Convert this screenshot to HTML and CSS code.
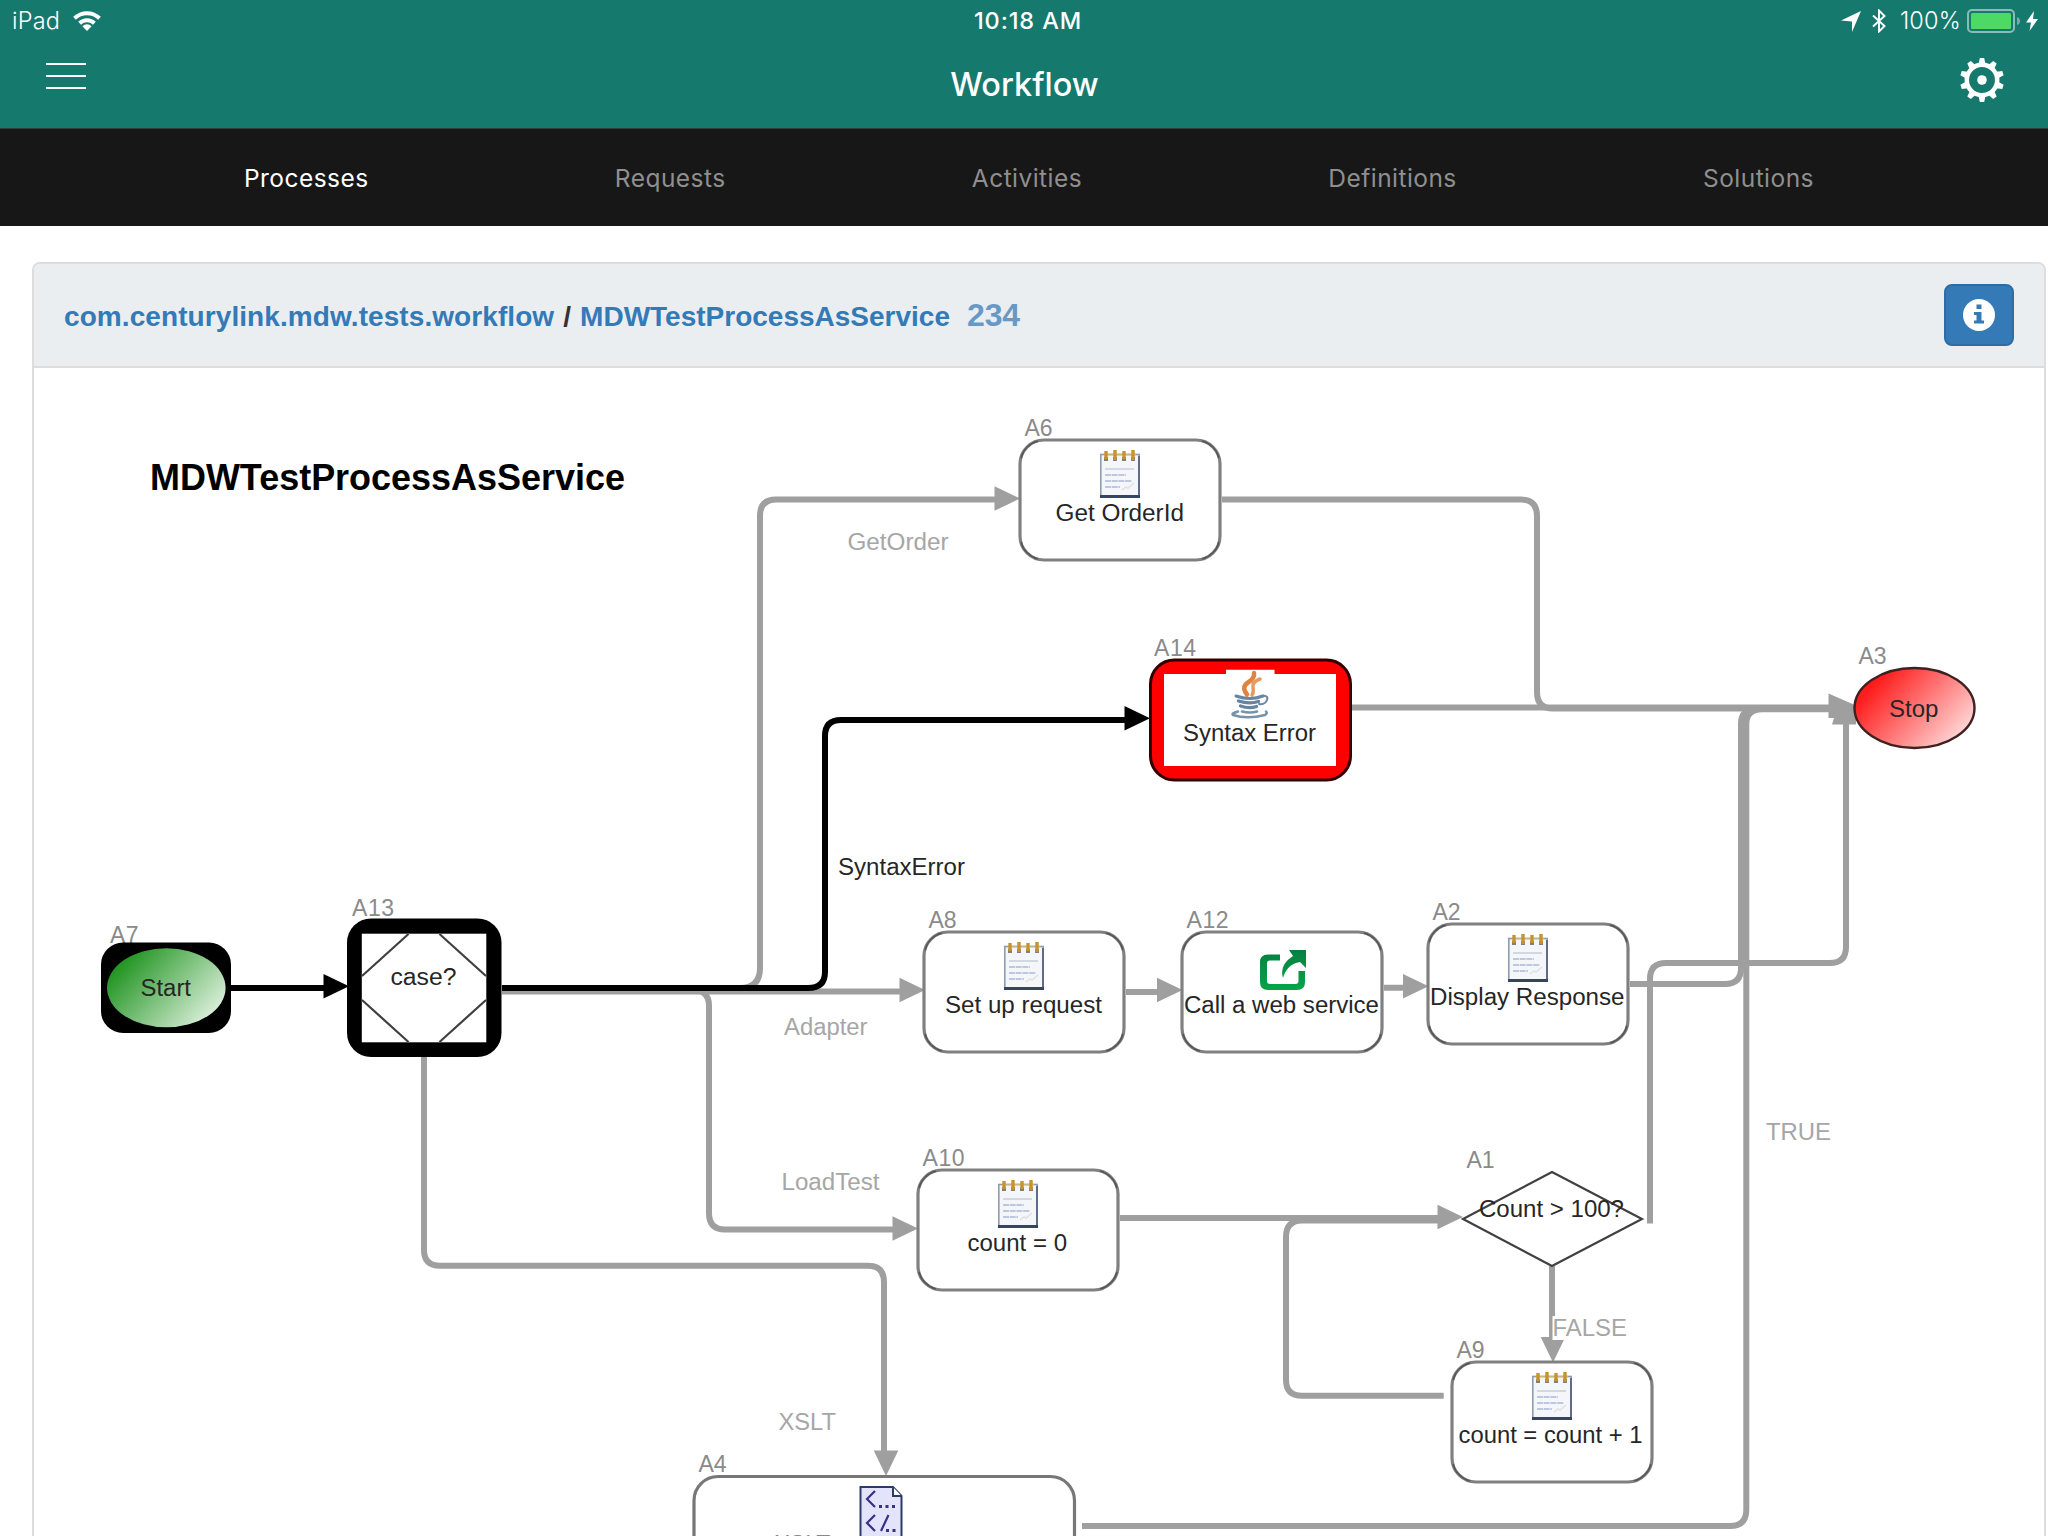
FILE: index.html
```html
<!DOCTYPE html>
<html lang="en">
<head>
<meta charset="utf-8">
<title>Workflow</title>
<link rel="stylesheet" href="styles.css">
</head>
<body>
<header class="app-header">
  <div class="status-bar">
    <div class="status-left">
      <span class="device">iPad</span>
      <svg class="wifi" width="28" height="20" viewBox="0 0 28 20"><g fill="none" stroke="#fff" stroke-width="4"><path d="M1.500 7.200a18 18 0 0 1 25 0"/><path d="M6.600 12.200a10.600 10.600 0 0 1 14.800 0"/></g><path d="M14 20l-4.600-4.800a6.600 6.600 0 0 1 9.200 0z" fill="#fff"/></svg>
    </div>
    <span class="clock">10:18 AM</span>
    <div class="status-right">
      <svg class="locate" width="20" height="21" viewBox="0 0 20 21"><path d="M20 0L11 21V10.500L0 9.500z" fill="#fff"/></svg>
      <svg class="bluetooth" width="16" height="24" viewBox="0 0 16 24"><path d="M2 6.500l11.500 10.500L8 22.500V1.500L13.500 7 2 17.500" fill="none" stroke="#fff" stroke-width="1.900"/></svg>
      <span class="percent">100%</span>
      <svg class="battery" width="54" height="24" viewBox="0 0 54 24"><rect x="1" y="1" width="46" height="22" rx="4" fill="none" stroke="#8abcb6" stroke-width="2"/><rect x="4" y="4" width="40" height="16" rx="1.500" fill="#4cd964"/><path d="M50 8q3 1 3 4t-3 4z" fill="#73afa8"/></svg>
      <svg class="bolt" width="12" height="20" viewBox="0 0 12 20"><path d="M8 0L0 11.500H5L3.500 20 12 8H7z" fill="#fff"/></svg>
    </div>
  </div>
  <div class="title-bar">
    <div class="menu"><i></i><i></i><i></i></div>
    <h1>Workflow</h1>
    <svg class="gear" width="44" height="44" viewBox="-22 -22 44 44">
      <defs><path id="tooth" d="M-3.400-16L-2.200-22H2.200L3.400-16z"/></defs>
      <g fill="#fff"><circle r="15.200" fill="none" stroke="#fff" stroke-width="4.500"/><circle r="4.800"/>
      <use href="#tooth"/><use href="#tooth" transform="rotate(36)"/><use href="#tooth" transform="rotate(72)"/><use href="#tooth" transform="rotate(108)"/><use href="#tooth" transform="rotate(144)"/><use href="#tooth" transform="rotate(180)"/><use href="#tooth" transform="rotate(216)"/><use href="#tooth" transform="rotate(252)"/><use href="#tooth" transform="rotate(288)"/><use href="#tooth" transform="rotate(324)"/></g>
    </svg>
  </div>
</header>
<nav class="tabs">
  <a class="active">Processes</a><a>Requests</a><a>Activities</a><a>Definitions</a><a>Solutions</a>
</nav>
<main class="panel">
  <div class="panel-heading">
    <div class="crumbs"><a class="pkg">com.centurylink.mdw.tests.workflow</a><span class="slash">/</span><a class="proc">MDWTestProcessAsService</a><a class="instance">234</a></div>
    <button class="info"><svg width="32" height="32" viewBox="0 0 32 32"><circle cx="16" cy="16" r="16" fill="#fff"/><path d="M13.500 5.500h5v4.500h-5zM11 13h7.500v8.500H21V24.500H11V21.500h2.500V16H11z" fill="#337ab7"/></svg></button>
  </div>
  <svg class="diagram" width="2010" height="1168" viewBox="34 368 2010 1168">
    <defs>
      <linearGradient id="green" x1="0" y1="0.200" x2="1" y2="0.800"><stop offset="0.050" stop-color="#1c921c"/><stop offset="1" stop-color="#e6f4e6"/></linearGradient>
      <linearGradient id="red" x1="0" y1="0.200" x2="1" y2="0.800"><stop offset="0.120" stop-color="#ff1c1c"/><stop offset="1" stop-color="#ffe4e4"/></linearGradient>
      <linearGradient id="leaf" x1="0" y1="0" x2="0" y2="1"><stop offset="0" stop-color="#087f42"/><stop offset="1" stop-color="#05a549"/></linearGradient>
      <g id="box">
        <rect width="200" height="120" rx="24" fill="#fff" stroke="#808080" stroke-width="3.200"/>
        <path class="corners" d="M1 18A24 24 0 0 1 18 1M182 1A24 24 0 0 1 199 18M199 102A24 24 0 0 1 182 119M18 119A24 24 0 0 1 1 102"/>
      </g>
      <g id="pad">
        <rect x="0.800" y="4.500" width="38.400" height="42" fill="#f4f6fa" stroke="#8d9bb0" stroke-width="1.600"/>
        <path d="M39 6V47" stroke="#5d6c88" stroke-width="2"/><path d="M0 46.500H40" stroke="#36445f" stroke-width="3"/>
        <path d="M4 4.500H36" stroke="#c9b48c" stroke-width="1.500"/>
        <path d="M6 7v4M15 7v4M24 7v4M33 7v4" stroke="#7e7f86" stroke-width="4"/>
        <path d="M6 1v8M15 0v10M24 1v8M33 0v10" stroke="#c8932f" stroke-width="3.400"/>
        <path d="M5 19H34" stroke="#c9d1dd" stroke-width="1.600"/>
        <path d="M5 25H26M5 31H32M5 37H20" stroke="#bcc7e0" stroke-width="2.200" stroke-dasharray="6 0.700"/>
        <path d="M22 40l4-3 2 1 6-5" stroke="#dfe2de" stroke-width="1.500" fill="none"/>
      </g>
      <path id="tip" d="M-25.500-12.300V12.300L0 0z"/>
    </defs>

    <g class="links">
      <path d="M740 988Q760 988 760 968V516Q760 499.500 776 499.500H997"/>
      <path d="M502 991.500H900"/>
      <path d="M502 990H693Q709 990 709 1006V1213Q709 1229.500 725 1229.500H895"/>
      <path d="M424 1057V1250Q424 1265.700 440 1265.700H868Q884 1265.700 884 1282V1454"/>
      <path d="M1126 992H1160M1384 987.700H1406"/>
      <path d="M1222 499.500H1521Q1537 499.500 1537 516V692Q1537 708.500 1553 708.500H1830"/>
      <path d="M1352 707.500H1830"/>
      <path d="M1630 984H1725Q1741 984 1741 968V724Q1741 708.800 1757 708.800"/>
      <path d="M1082 1526H1730Q1746.300 1526 1746.300 1510V724Q1746.300 709.200 1762 709.200H1830"/>
      <path d="M1650 1223.500V979Q1650 963 1666 963H1830Q1846 963 1846 947V722"/>
      <path d="M1120 1218H1440"/>
      <path d="M1443.700 1395.700H1302Q1286 1395.700 1286 1380V1237Q1286 1220.500 1302 1220.500H1440"/>
      <path d="M1552 1266V1340"/>
    </g>
    <g class="links taken">
      <path d="M231 988H326"/>
      <path d="M502 988H808Q825 988 825 972V736Q825 720 841 720H1128"/>
    </g>
    <g fill="#9f9f9f">
      <use href="#tip" x="1020" y="498.500"/><use href="#tip" x="925" y="990"/><use href="#tip" x="918" y="1228.500"/>
      <use href="#tip" transform="translate(886 1476) rotate(90)"/>
      <use href="#tip" x="1182.500" y="990"/><use href="#tip" x="1428.500" y="986.300"/>
      <use href="#tip" x="1463" y="1217"/><use href="#tip" transform="translate(1553 1362.500) rotate(90)"/>
      <path d="M1828.500 693.500L1856 705.500V724.500H1832L1834 718H1828.500z"/>
    </g>
    <use href="#tip" x="349" y="986.300"/><use href="#tip" x="1150" y="718.200"/>

    <g class="ids">
      <text x="110" y="943" textLength="28.500">A7</text><text x="352" y="915.500" textLength="42">A13</text>
      <text x="1024.500" y="436" textLength="28">A6</text><text x="1154" y="656" textLength="42">A14</text>
      <text x="1858.500" y="663.700" textLength="28">A3</text><text x="928.500" y="927.700" textLength="28">A8</text>
      <text x="1186.500" y="927.700" textLength="42">A12</text><text x="1432.500" y="920" textLength="28">A2</text>
      <text x="922.500" y="1166" textLength="42">A10</text><text x="1466.500" y="1167.700" textLength="28">A1</text>
      <text x="1456.500" y="1357.700" textLength="28">A9</text><text x="698.500" y="1471.700" textLength="28">A4</text>
    </g>

    <rect x="101" y="942.500" width="130" height="90.500" rx="22"/>
    <ellipse cx="166.300" cy="987.800" rx="59.300" ry="39.500" fill="url(#green)"/>
    <rect x="347" y="918.500" width="154.500" height="138.500" rx="24"/>
    <rect x="361.800" y="933.700" width="124.500" height="108.600" fill="#fff"/>
    <path d="M362 976L408.500 934M439.500 934L486 976M486 1000L439.500 1042M408.500 1042L362 1000" stroke="#404040" stroke-width="2.200"/>

    <use href="#box" x="1020" y="440"/><use href="#pad" x="1100" y="450"/>
    <use href="#box" x="924" y="932"/><use href="#pad" x="1004" y="942"/>
    <use href="#box" x="1182" y="932"/>
    <use href="#box" x="1428" y="924"/><use href="#pad" x="1508" y="934"/>
    <use href="#box" x="918" y="1170"/><use href="#pad" x="998" y="1180"/>
    <use href="#box" x="1452" y="1362"/><use href="#pad" x="1532" y="1372"/>
    <rect x="694" y="1476.500" width="380.500" height="120" rx="24" fill="#fff" stroke="#777" stroke-width="3.200"/>
    <path d="M1552 1172L1642 1219L1552 1266L1463 1219z" fill="#fff" stroke="#404040" stroke-width="2.200"/>
    <ellipse cx="1914.500" cy="708" rx="60" ry="40" fill="url(#red)" stroke="#402020" stroke-width="2.400"/>

    <rect x="1150.500" y="660" width="200" height="120" rx="24" fill="#f00" stroke="#300" stroke-width="3"/>
    <path d="M1164 674H1226V669.700H1274.500V674H1336V766H1164z" fill="#fff"/>
    <g fill="none" stroke-linecap="round">
      <path d="M1254 673q1 5-6 9.500t-1 12" stroke="#e0833f" stroke-width="4.500"/>
      <path d="M1260 679q-8 3-7 8t-1 8" stroke="#e59a62" stroke-width="3.500"/>
      <path d="M1236 696q14 5 27 0" stroke="#6886a2" stroke-width="3"/><path d="M1261 696q8-1 6 4t-8 4" stroke="#6886a2" stroke-width="2"/>
      <path d="M1238.500 701q11 3.500 20 .5M1240.500 706q9 3 16 .5" stroke="#6485a2" stroke-width="3.400"/>
      <path d="M1238 711.500q-7 2-5 3.500 14 4.500 32 0 3-2 1-3.500M1242 711.500q8 2 15 0" stroke="#7892aa" stroke-width="2.600"/>
    </g>

    <path d="M1280 954.500H1268Q1260 954.500 1260 962V982Q1260 990 1268 990H1297Q1305 990 1305 982V971H1298.500V981Q1298.500 984 1295.500 984H1270Q1267 984 1267 981V963Q1267 960.500 1270 960.500H1280zM1289 950H1306V968L1300 962Q1287 964 1283 978Q1279 965 1293 956z" fill="url(#leaf)"/>

    <text class="plain" x="774.500" y="1551.500">XSLT</text>
    <path d="M860.500 1487H893L901.500 1496V1540H860.500z" fill="#e3e3fb" stroke="#2c3c66" stroke-width="2"/>
    <path d="M893 1487V1496H901.500" fill="#fff" stroke="#2c3c66" stroke-width="2"/>
    <g fill="none" stroke="#3b2f86" stroke-width="2.200"><path d="M875 1491L867 1499L875 1507M875 1515L867 1523L875 1531M888.500 1515L881 1531"/><path d="M879 1506.500H895M886 1530.500H897" stroke-width="3" stroke-dasharray="3 3.500"/></g>

    <g class="names">
      <text x="1055.500" y="520.500" textLength="128.500" lengthAdjust="spacingAndGlyphs">Get OrderId</text>
      <text x="1183" y="740.500" textLength="133" lengthAdjust="spacingAndGlyphs">Syntax Error</text>
      <text x="1889" y="716.500" textLength="49.500" lengthAdjust="spacingAndGlyphs">Stop</text>
      <text x="140.500" y="996" textLength="50.500" lengthAdjust="spacingAndGlyphs">Start</text>
      <text x="390.500" y="984.500" textLength="66" lengthAdjust="spacingAndGlyphs">case?</text>
      <text x="945" y="1012.600" textLength="157" lengthAdjust="spacingAndGlyphs">Set up request</text>
      <text x="1184" y="1012.600" textLength="195" lengthAdjust="spacingAndGlyphs">Call a web service</text>
      <text x="1430" y="1004.500" textLength="194.500" lengthAdjust="spacingAndGlyphs">Display Response</text>
      <text x="967.500" y="1250.500" textLength="99.500" lengthAdjust="spacingAndGlyphs">count = 0</text>
      <text x="1479" y="1216.500" textLength="145" lengthAdjust="spacingAndGlyphs">Count &gt; 100?</text>
      <text x="1458.500" y="1442.500" textLength="184" lengthAdjust="spacingAndGlyphs">count = count + 1</text>
      <text x="838" y="874.600" textLength="127" lengthAdjust="spacingAndGlyphs">SyntaxError</text>
    </g>
    <rect x="1552.500" y="1316" width="75" height="24" fill="#fff"/>
    <g class="names muted">
      <text x="847.500" y="550" textLength="101" lengthAdjust="spacingAndGlyphs">GetOrder</text>
      <text x="784" y="1034.600" textLength="83.500" lengthAdjust="spacingAndGlyphs">Adapter</text>
      <text x="781.500" y="1190.300" textLength="98" lengthAdjust="spacingAndGlyphs">LoadTest</text>
      <text x="778.500" y="1430" textLength="57.500" lengthAdjust="spacingAndGlyphs">XSLT</text>
      <text x="1766" y="1140" textLength="65" lengthAdjust="spacingAndGlyphs">TRUE</text>
      <text x="1552.500" y="1335.700" textLength="74.500" lengthAdjust="spacingAndGlyphs">FALSE</text>
    </g>
    <text class="heading" x="150" y="490" textLength="475" lengthAdjust="spacingAndGlyphs">MDWTestProcessAsService</text>
  </svg>
</main>
</body>
</html>
```
FILE: styles.css
```css
* { box-sizing: border-box; }
html, body { height: 1536px; overflow: hidden; }
body {
  margin: 0;
  display: flex;
  flex-direction: column;
  background: #fff;
  font-family: Inter, "Liberation Sans", sans-serif;
}
svg { display: block; flex: none; }

.app-header { flex: none; height: 129px; background: #15796e; color: #fff; border-bottom: 1px solid #333c3b; }
.status-bar {
  height: 42px;
  display: grid;
  grid-template-columns: 1fr auto 1fr;
  align-items: center;
  padding: 0 10px 0 12px;
  font-size: 23.5px;
  line-height: 42px;
}
.status-left, .status-right { display: flex; align-items: center; }
.status-left { gap: 13px; }
.status-right { justify-content: flex-end; }
.device { font-weight: 300; letter-spacing: 0.2px; }
.clock { padding-left: 6px; font-weight: 500; letter-spacing: 0.9px; }
.percent { font-weight: 300; margin: 0 6px 0 13px; letter-spacing: 0.2px; }
.bluetooth { margin-left: 10px; }
.bolt { margin-left: 5px; }

.title-bar { display: flex; justify-content: space-between; padding: 0 44px 0 46px; }
.menu { display: flex; flex-direction: column; gap: 10px; width: 40px; padding-top: 21px; }
.menu i { height: 2px; background: #fff; }
.title-bar h1 { margin: 0; padding-left: 3px; font-size: 32.5px; font-weight: 500; line-height: 85px; }
.gear { margin-top: 16px; }

.tabs {
  flex: none;
  height: 97px;
  padding: 0 234px 0 244px;
  display: flex;
  justify-content: space-between;
  background: #171717;
  color: #8f8f8f;
  font-size: 24.5px;
  letter-spacing: 0.45px;
  line-height: 98px;
}
.tabs .active { color: #fff; }

.panel { flex: none; width: 2014px; margin: 36px 0 0 32px; border: 2px solid #ddd; border-radius: 8px 8px 0 0; overflow: hidden; }
.panel-heading {
  height: 104px;
  padding: 0 30px 0 30px;
  display: flex;
  align-items: center;
  justify-content: space-between;
  background: #eaeef1;
  border-bottom: 2px solid #ddd;
}
.crumbs {
  display: flex;
  align-items: baseline;
  padding-top: 2px;
  font: bold 28px/40px "Liberation Sans", Arial, sans-serif;
  letter-spacing: 0.08px;
  color: #337ab7;
}
.slash { color: #333; margin: 0 9px 0 9px; }
.proc { letter-spacing: 0; }
.instance { margin-left: 17px; font-size: 32px; letter-spacing: -0.1px; color: #6899c6; }
.info {
  width: 70px;
  height: 62px;
  padding: 0;
  display: flex;
  align-items: center;
  justify-content: center;
  background: #337ab7;
  border: 2px solid #2e6da4;
  border-radius: 8px;
}

.diagram { font-family: "Liberation Sans", Arial, sans-serif; font-size: 23px; }
.links { fill: none; stroke: #9f9f9f; stroke-width: 6; }
.taken { stroke: #000; }
.corners { fill: none; stroke: #555; stroke-width: 1.6; }
.ids { fill: #8a8a8a; }
.names { fill: #262626; }
.plain { fill: #888; }
.names.muted { fill: #a6a6a6; }
.heading { font-size: 36px; font-weight: bold; fill: #000; }
```
